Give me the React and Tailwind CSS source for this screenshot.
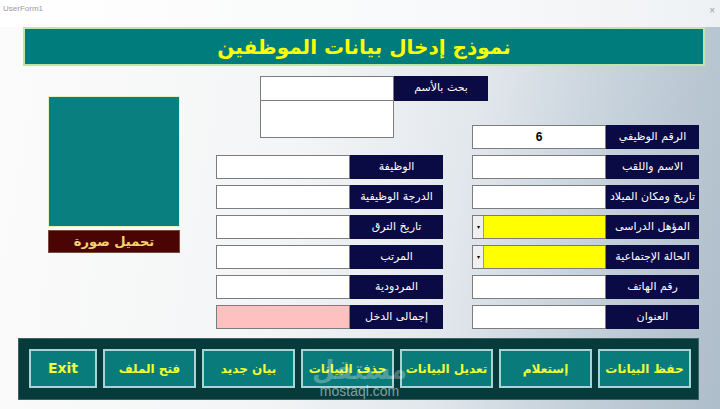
const arabic = "font-['DejaVu_Sans','Noto_Sans',sans-serif]";

const rightFields = [
  { label: 'الرقم الوظيفي', value: '6' },
  { label: 'الاسم واللقب' },
  { label: 'تاريخ ومكان الميلاد' },
  { label: 'المؤهل الدراسى', combo: true },
  { label: 'الحالة الإجتماعية', combo: true },
  { label: 'رقم الهاتف' },
  { label: 'العنوان' },
];

const centerFields = [
  { label: 'الوظيفة' },
  { label: 'الدرجة الوظيفية' },
  { label: 'تاريخ الترق' },
  { label: 'المرتب' },
  { label: 'المردودية' },
  { label: 'إجمالى الدخل', pink: true },
];

const buttons = ['فتح الملف', 'بيان جديد', 'حذف البيانات', 'تعديل البيانات', 'إستعلام', 'حفظ البيانات'];

function Field({ label, value, combo, pink }) {
  return (
    <div className="flex h-[24px]">
      {combo ? (
        <div className="flex w-[134px] border border-[#7c7c7c]">
          <div className="w-[11px] bg-[#f0f0f0] border-r border-[#9a9a9a] flex items-center justify-center text-[6px] text-black leading-none">▾</div>
          <div className="flex-1 bg-[#ffff00]" />
        </div>
      ) : (
        <div
          className={`w-[134px] border border-[#7c7c7c] flex items-center justify-center text-[12px] font-bold text-black font-['Liberation_Sans',sans-serif] ${
            pink ? 'bg-[#ffc0c0]' : 'bg-white'
          }`}
        >
          {value}
        </div>
      )}
      <div
        dir="rtl"
        className={`w-[93px] bg-[#0a0a45] text-white text-[11px] flex items-center justify-center whitespace-nowrap overflow-hidden ${arabic}`}
      >
        {label}
      </div>
    </div>
  );
}

function FormButton({ children, wide }) {
  return (
    <button
      type="button"
      className={`${wide ? 'w-[93px] text-[12px]' : 'w-[68px] text-[14px]'} h-[39px] bg-[#0a7b7b] border-2 border-[#a9d4d4] text-[#f2ff33] font-bold flex items-center justify-center whitespace-nowrap ${arabic}`}
    >
      {children}
    </button>
  );
}

export default function App() {
  return (
    <div className="relative w-[720px] h-[409px] overflow-hidden bg-[linear-gradient(100deg,#fbfbfb_0%,#f4f5f6_40%,#e3e8ed_62%,#c3cfd9_82%,#aebdca_100%)]">
      {/* window caption */}
      <div className="h-[27px] flex justify-between px-[3px] pt-[3px] text-[8px] text-[#9a9a9a] font-['Liberation_Sans',sans-serif] bg-[linear-gradient(90deg,#ffffff_0%,#f7f8f9_70%,#eef1f4_100%)]">
        <span>UserForm1</span>
        <span className="text-[10px] pr-[2px]">×</span>
      </div>

      {/* form title */}
      <div className="ml-[23px] mr-[15px] h-[39px] bg-[#007c7c] border-2 border-[#bfe6a8] flex items-center justify-center">
        <span dir="rtl" className={`text-[#ffff00] text-[20px] font-bold ${arabic}`}>
          نموذج إدخال بيانات الموظفين
        </span>
      </div>

      <div className="flex mt-[10px] h-[253px]">
        {/* photo */}
        <div className="ml-[48px] w-[132px] pt-[20px] flex flex-col">
          <div className="h-[131px] bg-[#097f7f] border border-[#e8efc0]" />
          <div className={`mt-[3px] h-[23px] bg-[#4a0404] border border-[#7a4a3a] flex items-center justify-center text-[#f4d46a] text-[13px] font-bold ${arabic}`}>
            تحميل صورة
          </div>
        </div>

        {/* center column */}
        <div className="ml-[36px] w-[227px] flex flex-col">
          <div className="ml-[44px] flex h-[25px] w-[228px]">
            <div className="w-[134px] bg-white border border-[#7c7c7c]" />
            <div dir="rtl" className={`w-[94px] bg-[#0a0a45] text-white text-[11px] flex items-center justify-center ${arabic}`}>
              بحث بالأسم
            </div>
          </div>
          <div className="ml-[44px] w-[134px] h-[37px] bg-white border border-[#7c7c7c] border-t-0" />
          <div className="mt-[17px] flex flex-col gap-[6px]">
            {centerFields.map((f) => (
              <Field key={f.label} {...f} />
            ))}
          </div>
        </div>

        {/* right column */}
        <div className="ml-[29px] w-[227px] pt-[49px] flex flex-col gap-[6px]">
          {rightFields.map((f) => (
            <Field key={f.label} {...f} />
          ))}
        </div>
      </div>

      {/* action bar */}
      <div className="ml-[18px] mt-[9px] w-[681px] h-[62px] bg-[#073b3b] border border-[#3d6464] pl-[10px] pt-[10px] flex gap-[6px]">
        <FormButton>Exit</FormButton>
        {buttons.map((b) => (
          <FormButton key={b} wide>
            {b}
          </FormButton>
        ))}
      </div>

      {/* site mark */}
      <div className="absolute left-[312px] top-[356px] flex flex-col items-center pointer-events-none">
        <span className={`text-[26px] font-bold leading-[28px] text-white/30 ${arabic}`}>مستقل</span>
        <span className="text-[14px] leading-[14px] text-white/50 font-['Liberation_Sans',sans-serif]">mostaql.com</span>
      </div>
    </div>
  );
}
